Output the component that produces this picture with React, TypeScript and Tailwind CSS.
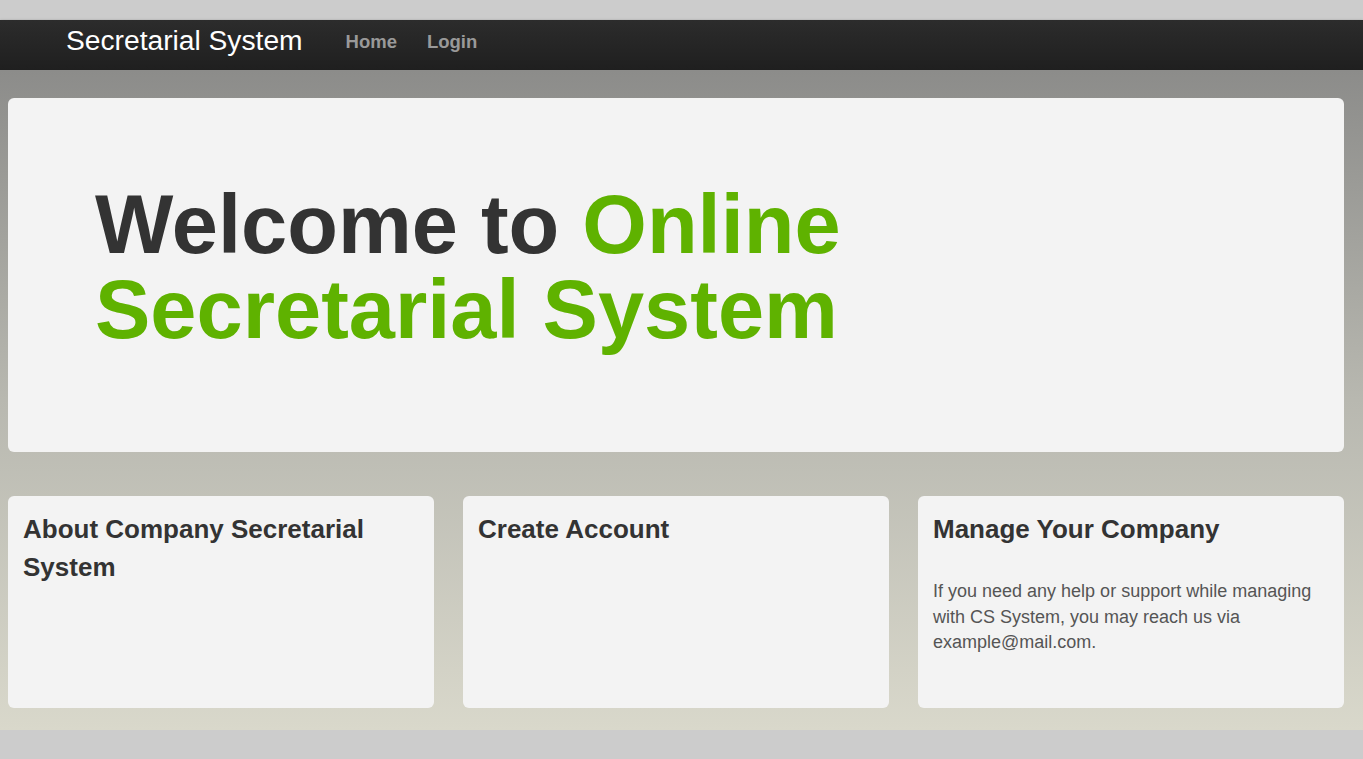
export default function App() {
  const cards = [
    { title: "About Company Secretarial System", body: "" },
    { title: "Create Account", body: "" },
    {
      title: "Manage Your Company",
      body: "If you need any help or support while managing with CS System, you may reach us via example@mail.com.",
    },
  ]

  return (
    <div className="min-h-[759px] bg-[#cccccc] pt-5 font-['Liberation_Sans',Arial,sans-serif]">
      <nav className="h-[50px] bg-gradient-to-b from-[#2c2c2c] to-[#1f1f1f] shadow-[0_1px_3px_rgba(0,0,0,0.4)] flex items-center pl-[66px] pb-[10px]">
        <span className="text-white text-[28.2px] leading-none">Secretarial System</span>
        <a className="ml-[43px] text-[#999999] font-bold text-[18.5px] mt-[3px]">Home</a>
        <a className="ml-[30px] text-[#999999] font-bold text-[18.5px] mt-[3px]">Login</a>
      </nav>

      <main className="bg-gradient-to-b from-[#8c8c8a] via-[#b8b8b0] to-[#d9d8cb] pl-2 pr-[19px] pt-7 pb-[22px]">
        <section className="bg-[#f3f3f3] rounded-md h-[354px] flex items-center pl-[87px]">
          <h1 className="text-[83px] font-bold leading-[85px] text-[#333333] -mt-[16px]">
            Welcome to <span className="text-[#5fb200]">Online</span>
            <br />
            <span className="text-[#5fb200]">Secretarial System</span>
          </h1>
        </section>

        <div className="grid grid-cols-3 gap-[29px] mt-[44px]">
          {cards.map((c) => (
            <div key={c.title} className="bg-[#f3f3f3] rounded-md h-[212px] px-[15px] pt-[14px]">
              <h2 className="text-[26px] font-bold leading-[38px] text-[#333333] pr-12">{c.title}</h2>
              {c.body && (
                <p className="mt-[31px] text-[18px] leading-[25.5px] text-[#555555] pr-2">{c.body}</p>
              )}
            </div>
          ))}
        </div>
      </main>
    </div>
  )
}
